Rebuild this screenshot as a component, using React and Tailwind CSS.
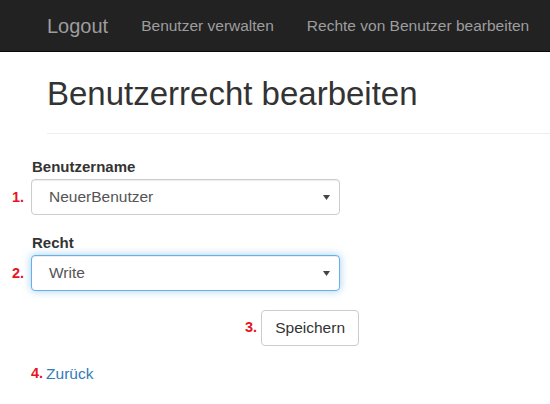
import React from 'react';

function FakeSelect({ value, focused }) {
    return (
        <div
            className={
                'flex items-center justify-between w-[309px] h-[36px] rounded-[4px] bg-white pl-[17px] pr-[9px] text-[15.5px] text-[#555] ' +
                (focused
                    ? 'border border-[#66afe9] shadow-[inset_0_1px_1px_rgba(0,0,0,0.075),0_0_8px_rgba(102,175,233,0.6)]'
                    : 'border border-[#ccc] shadow-[inset_0_1px_1px_rgba(0,0,0,0.075)]')
            }
        >
            <span>{value}</span>
            <svg width="7" height="5" viewBox="0 0 7 5">
                <path d="M0 0 L7 0 L3.5 5 Z" fill="#444" />
            </svg>
        </div>
    );
}

function Num({ n }) {
    return <span className="text-[14.5px] font-bold text-[#e8131e]">{n}.</span>;
}

export default function App() {
    return (
        <div className="min-h-screen bg-white font-['Liberation_Sans',Arial,sans-serif] text-[#333]">
            {/* Navbar */}
            <nav className="h-[52px] bg-[#222] border-b border-[#080808] flex items-center">
                <span className="ml-[47px] text-[20px] text-[#9d9d9d]">Logout</span>
                <span className="ml-[33px] text-[15.5px] text-[#9d9d9d]">Benutzer verwalten</span>
                <span className="ml-[33px] text-[15.5px] text-[#9d9d9d]">Rechte von Benutzer bearbeiten</span>
            </nav>

            {/* Header */}
            <div className="ml-[47px] mt-[22px] pb-[19px] border-b border-[#eee]">
                <h1 className="text-[33px] leading-[40px] text-[#333]">Benutzerrecht bearbeiten</h1>
            </div>

            {/* Form */}
            <div className="mt-[23px]">
                <label className="block ml-[32px] text-[15px] font-bold leading-[20px]">Benutzername</label>
                <div className="flex items-center mt-[2px]">
                    <div className="w-[25px] text-right pr-[1px]"><Num n={1} /></div>
                    <div className="ml-[6px]"><FakeSelect value="NeuerBenutzer" /></div>
                </div>

                <label className="block ml-[32px] mt-[18px] text-[15px] font-bold leading-[20px]">Recht</label>
                <div className="flex items-center mt-[2px]">
                    <div className="w-[25px] text-right pr-[1px]"><Num n={2} /></div>
                    <div className="ml-[6px]"><FakeSelect value="Write" focused /></div>
                </div>

                <div className="flex items-center mt-[19px] ml-[245px]">
                    <Num n={3} />
                    <button className="ml-[4px] w-[98px] h-[36px] rounded-[4px] border border-[#ccc] bg-white text-[15.5px] text-[#333]">
                        Speichern
                    </button>
                </div>

                <div className="flex items-center mt-[16px] ml-[31px]">
                    <Num n={4} />
                    <a href="#" className="ml-[3px] text-[15.5px] text-[#337ab7]">Zurück</a>
                </div>
            </div>
        </div>
    );
}
